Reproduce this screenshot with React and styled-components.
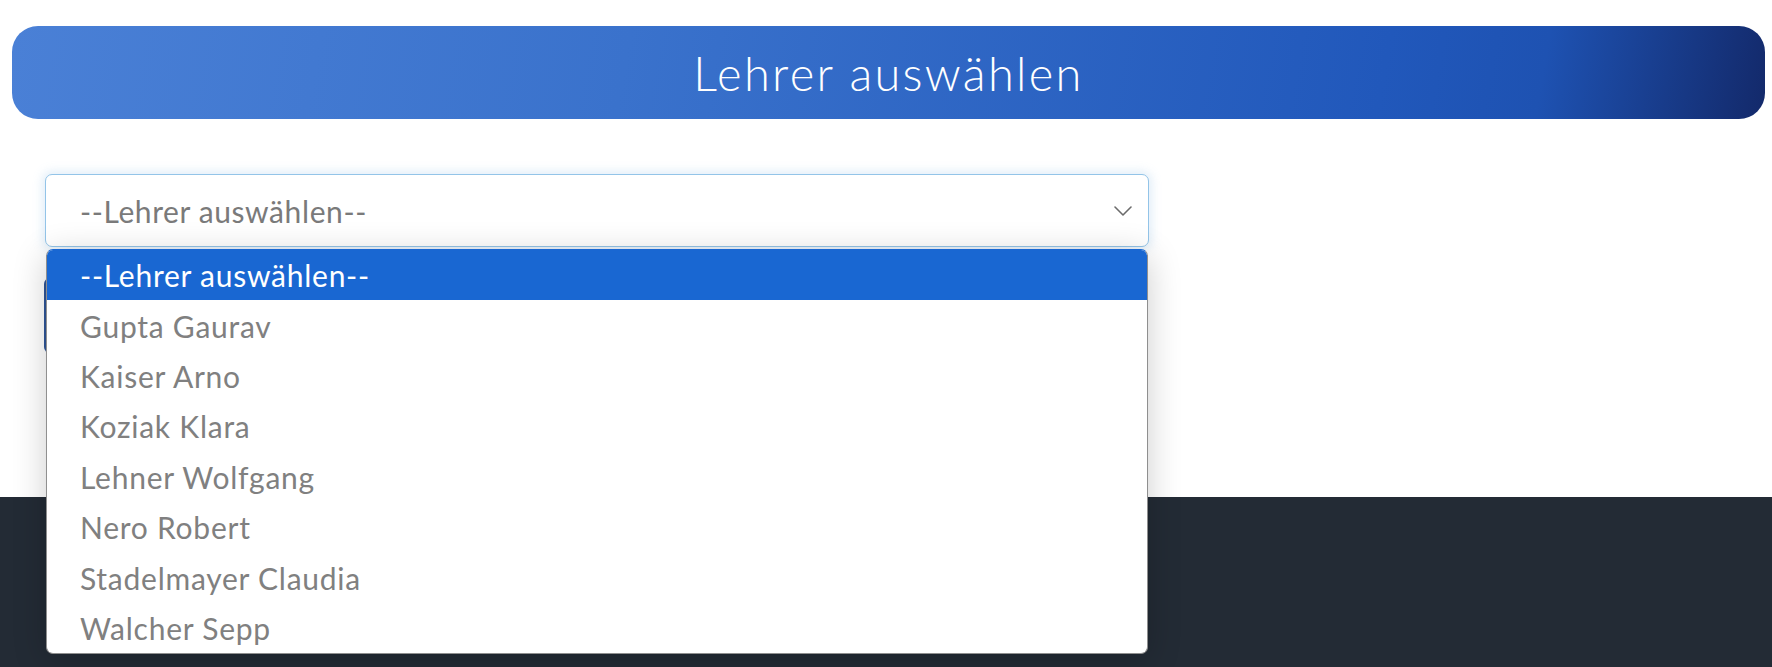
import React from "react";
import styled, { createGlobalStyle } from "styled-components";

const GlobalStyle = createGlobalStyle`
  html, body { margin: 0; padding: 0; background: #ffffff; }
  body { font-family: Lato, "Open Sans", sans-serif; }
  * { box-sizing: border-box; }
`;

const Page = styled.div`
  min-height: 667px;
  display: flex;
  flex-direction: column;
`;

const Header = styled.h1`
  margin: 26px 7px 0 12px;
  height: 93px;
  border-radius: 26px;
  background: linear-gradient(100deg, #4a80d6 0%, #3a72cc 35%, #2158bb 78%, #1e52b2 87%, #13296a 100%);
  color: #ffffff;
  display: flex;
  align-items: center;
  justify-content: center;
  font-family: Lato, sans-serif;
  font-weight: 300;
  font-size: 47px;
  letter-spacing: 2.3px;
`;

const Main = styled.main`
  height: 378px;
  padding: 55px 0 0 45px;
  display: flex;
  flex-direction: column;
  gap: 31px;
`;

const SelectWrap = styled.div`
  position: relative;
  width: 1104px;
  z-index: 2;
`;

const SelectBox = styled.div`
  height: 73px;
  display: flex;
  align-items: center;
  justify-content: space-between;
  padding: 0 16px 0 34px;
  border: 1px solid #93c4e8;
  border-radius: 7px;
  background: #ffffff;
  box-shadow: 0 0 10px 3px rgba(150, 195, 230, 0.28);
  color: #7a7a7a;
  font-size: 30px;
  letter-spacing: 0.6px;
`;

const Chevron = () => (
  <svg width="18" height="10" viewBox="0 0 18 10" fill="none">
    <path d="M1 1l8 8 8-8" stroke="#6b6b6b" strokeWidth="1.6" strokeLinecap="round" strokeLinejoin="round" />
  </svg>
);

const List = styled.ul`
  position: absolute;
  top: calc(100% + 2px);
  left: 1px;
  right: 1px;
  margin: 0;
  padding: 0;
  list-style: none;
  background: #ffffff;
  border: 1px solid #8f8f8f;
  border-top-color: #1967d2;
  border-radius: 7px;
  overflow: hidden;
  box-shadow: 0 6px 34px rgba(0, 0, 0, 0.2);
`;

const Option = styled.li`
  height: 50.4px;
  display: flex;
  align-items: center;
  padding-left: 33px;
  font-size: 30px;
  letter-spacing: 0.75px;
  color: ${(p) => (p.$active ? "#ffffff" : "#808080")};
  background: ${(p) => (p.$active ? "#1967d2" : "transparent")};
`;

const SubmitButton = styled.button`
  width: 220px;
  height: 75px;
  margin-left: -1px;
  border: none;
  border-radius: 6px;
  background: #2f5597;
  position: relative;
  z-index: 1;
`;

const Footer = styled.footer`
  flex: 1;
  background: #232b35;
`;

const teachers = [
  "--Lehrer auswählen--",
  "Gupta Gaurav",
  "Kaiser Arno",
  "Koziak Klara",
  "Lehner Wolfgang",
  "Nero Robert",
  "Stadelmayer Claudia",
  "Walcher Sepp",
];

export default function App() {
  return (
    <>
      <GlobalStyle />
      <Page>
        <Header>Lehrer auswählen</Header>
        <Main>
          <SelectWrap>
            <SelectBox>
              <span>--Lehrer auswählen--</span>
              <Chevron />
            </SelectBox>
            <List>
              {teachers.map((t, i) => (
                <Option key={t} $active={i === 0}>
                  {t}
                </Option>
              ))}
            </List>
          </SelectWrap>
          <SubmitButton type="button" aria-label="Auswählen" />
        </Main>
        <Footer />
      </Page>
    </>
  );
}
